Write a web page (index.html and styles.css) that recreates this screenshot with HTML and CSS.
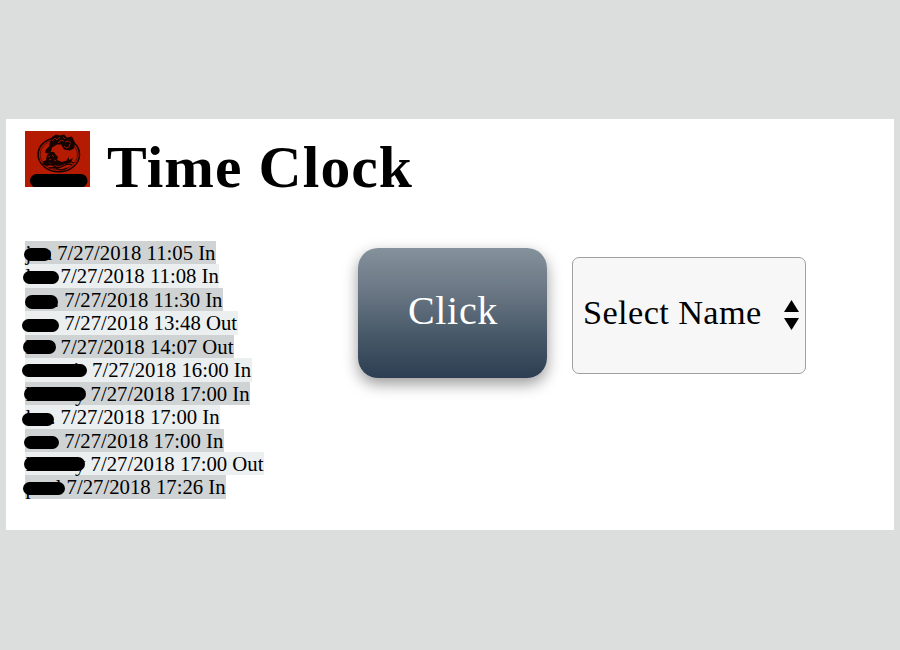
FILE: index.html
```html
<!DOCTYPE html>
<html lang="en">
<head>
<meta charset="utf-8">
<title>Time Clock</title>
<link rel="stylesheet" href="styles.css">
</head>
<body>
<main class="panel">
  <header class="header">
    <svg class="logo" viewBox="0 0 65 56" aria-hidden="true">
      <rect width="65" height="56" fill="#b41b02"/>
      <ellipse cx="33.8" cy="23.6" rx="20.7" ry="17.2" fill="none" stroke="#160300" stroke-width="1.5"/>
      <ellipse cx="33.8" cy="23.6" rx="18.6" ry="15.2" fill="none" stroke="#3c0700" stroke-width=".7"/>
      <path d="M25 11l2-5 4-2.500 4 1 4-1 3 3 5-1 3 6-1 6-4 2-6-1-3-5-4 0-5 3-1 4-3 2-3-1 1-3 3-3z" fill="#160300"/>
      <path d="M27 10l3-3 2 2 3-3m-2 6l3-3 3 1m-1-4l2 2m-1 7l2 2 3-1 1-3m-5-2l3-1 3 2" fill="none" stroke="#b41b02" stroke-width=".8"/>
      <path d="M21 29l1-5 3-3 4 0 2 3 2 2-1 3 5 2 2 3-5 1-6-1-7 1-4-2z" fill="#160300"/>
      <path d="M23 26l2-1m2-1l2 2m-5 3l2-1m3 1l2 1m-7 2l3 0" fill="none" stroke="#b41b02" stroke-width=".8"/>
      <path d="M37 31l4-1 3-4 0 3 4-2-2 4-4 2-4 0z" fill="#160300"/>
      <path d="M18 31q5-2 9 1t10 0 12 0M20 34q5-2 9 1t9 0 9-1M24 37q5-1 9 1t9-1" fill="none" stroke="#160300" stroke-width="1.300"/>
      <rect x="5" y="43" width="57.500" height="13.5" rx="6.5"/>
    </svg>
    <h1 class="title">Time Clock</h1>
  </header>
  <div class="content">
    <ul class="log">
      <li class="entry"><span class="name w1"><i>j</i><i class="last">n</i><b class="mark m1"></b></span>7/27/2018 11:05 In</li>
      <li class="entry"><span class="name w2"><i>l</i><b class="mark m2"></b></span>7/27/2018 11:08 In</li>
      <li class="entry"><span class="name w3"><i class="last">.</i><b class="mark m3"></b></span>7/27/2018 11:30 In</li>
      <li class="entry"><span class="name w3"><b class="mark m4"></b></span>7/27/2018 13:48 Out</li>
      <li class="entry"><span class="name w2"><i>l</i><b class="mark m5"></b></span>7/27/2018 14:07 Out</li>
      <li class="entry"><span class="name w6"><i class="dot">i</i><b class="mark m6"></b></span>7/27/2018 16:00 In</li>
      <li class="entry"><span class="name w7"><i>li</i><i class="mid">l</i><i class="last">y</i><b class="mark m7"></b></span>7/27/2018 17:00 In</li>
      <li class="entry"><span class="name w2"><i>l</i><i class="last">.</i><b class="mark m8"></b></span>7/27/2018 17:00 In</li>
      <li class="entry"><span class="name w3"><b class="mark m9"></b></span>7/27/2018 17:00 In</li>
      <li class="entry"><span class="name w7"><i>li</i><i class="mid">l</i><i class="last">y</i><b class="mark m10"></b></span>7/27/2018 17:00 Out</li>
      <li class="entry"><span class="name w11"><i>p</i><i class="last">l</i><b class="mark m11"></b></span>7/27/2018 17:26 In</li>
    </ul>
    <button class="click" type="button">Click</button>
    <div class="select" role="button" tabindex="0">
      <span>Select Name</span>
      <svg class="arrows" viewBox="0 0 15 30" aria-hidden="true"><path d="M0 12L7.5 0 15 12zM0 18h15L7.5 30z"/></svg>
    </div>
  </div>
</main>
</body>
</html>
```

FILE: styles.css
```css
* { box-sizing: border-box; }

body {
  margin: 0;
  padding: 119px 6px 0;
  height: 650px;
  overflow: hidden;
  background: #dcdedd;
  color: #000;
  font-family: "Palatino", "Palatino Linotype", "Liberation Serif", serif;
}

.panel {
  height: 411px;
  padding: 12px 19.4px 0;
  background: #fff;
}

.header {
  display: flex;
  align-items: flex-start;
  gap: 16.5px;
  height: 110px;
}

.logo { width: 65px; height: 56px; flex: none; }

.title {
  margin: 2px 0 0;
  font-size: 59.6px;
  line-height: 68px;
  letter-spacing: 1.1px;
  white-space: nowrap;
}

.content { display: flex; align-items: flex-start; }

.log {
  display: flex;
  flex-direction: column;
  align-items: flex-start;
  flex: none;
  width: 332.6px;
  margin: 0;
  padding: 0;
  list-style: none;
  font-family: "Liberation Serif", serif;
}

.entry {
  display: flex;
  height: 23.45px;
  padding-right: .5px;
  background: #ebeff0;
  font-size: 20.75px;
  line-height: 25px;
  white-space: nowrap;
}
.entry:nth-child(odd) { background: #cfd3d4; }

.name { position: relative; display: flex; flex: none; }
.name i { font-style: normal; }
.last { margin-left: auto; margin-right: 5.2px; }
.mid { margin-left: 18px; }
.dot { margin-left: 48px; }

.w1 { width: 31.8px; }
.w2 { width: 35.2px; }
.w3 { width: 38.8px; }
.w6 { width: 66.7px; }
.w7 { width: 65.2px; }
.w11 { width: 41.2px; }

.mark {
  position: absolute;
  height: 13.3px;
  border-radius: 7px;
  background: #000;
}
.m1 { left: -1.5px; top: 6.7px; width: 27px; }
.m2 { left: -2.5px; top: 6.6px; width: 36px; }
.m3 { left: -.5px; top: 7.6px; width: 33.5px; }
.m4 { left: -3.5px; top: 7.7px; width: 37px; }
.m5 { left: -2.5px; top: 5.7px; width: 33.5px; }
.m6 { left: -3.5px; top: 5.8px; width: 65px; }
.m7 { left: -1.5px; top: 5.8px; width: 62.5px; }
.m8 { left: -3.5px; top: 7.6px; width: 32.5px; }
.m9 { left: -1.5px; top: 7.4px; width: 35.5px; }
.m10 { left: -1.5px; top: 5.5px; width: 61px; }
.m11 { left: -2.5px; top: 6.5px; width: 42px; }

.click {
  flex: none;
  width: 189px;
  height: 130px;
  margin: 7px 25px 0 0;
  padding: 0 0 5px 1px;
  border: 0;
  border-radius: 20px;
  background: linear-gradient(#84929c, #6a7684 34%, #475968 67%, #2d3e53);
  box-shadow: 0 6px 15px rgba(0, 0, 0, .4);
  color: #fff;
  font-family: inherit;
  font-size: 40px;
  letter-spacing: .7px;
}

.select {
  display: flex;
  align-items: center;
  justify-content: space-between;
  flex: none;
  width: 234px;
  height: 117px;
  margin-top: 16px;
  padding: 0 6px 6px 10px;
  border: 1px solid #a0a0a0;
  border-radius: 7px;
  background: #f7f7f7;
  font-size: 34.3px;
  letter-spacing: .4px;
  white-space: nowrap;
}

.arrows { width: 15px; height: 30px; margin-top: 5px; }
```
